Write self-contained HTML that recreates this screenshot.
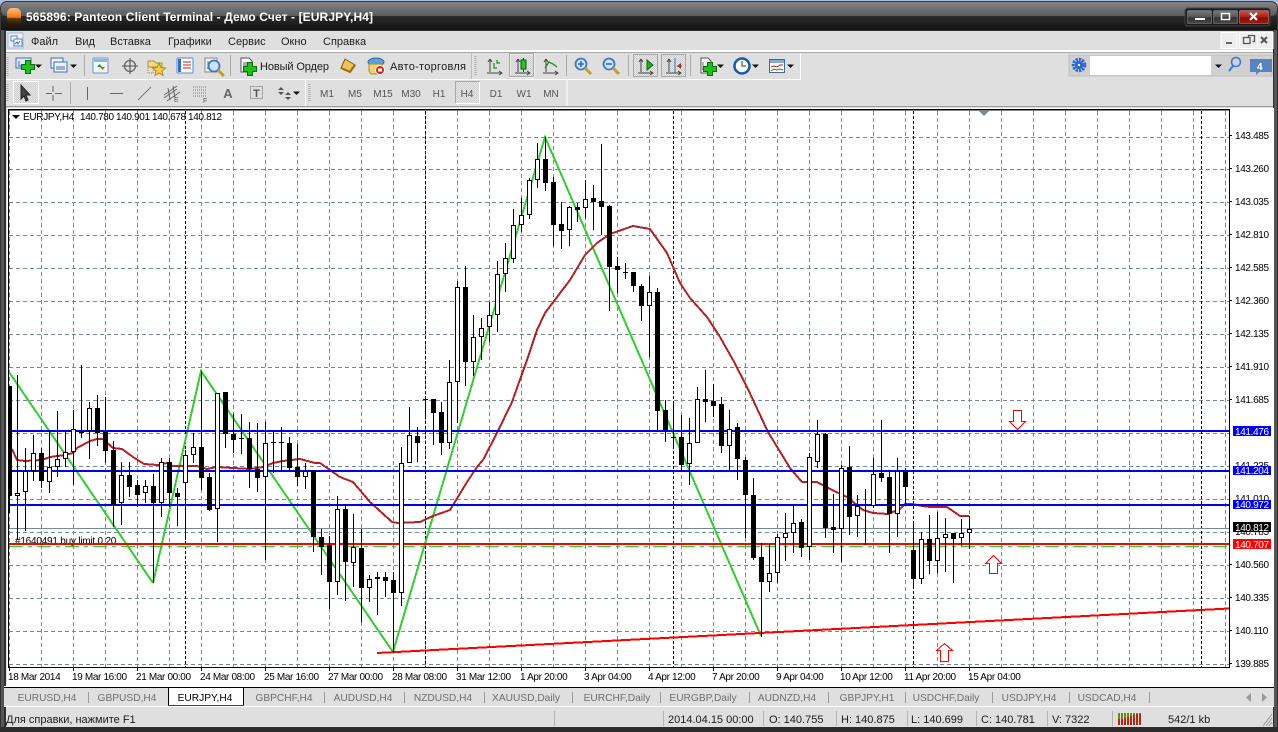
<!DOCTYPE html>
<html><head><meta charset="utf-8"><title>Panteon Client Terminal</title>
<style>
html,body{margin:0;padding:0;background:#dfdfdf;overflow:hidden;width:1278px;height:732px}
svg{display:block;font-family:"Liberation Sans","Noto Sans CJK SC",sans-serif}
.m{font-size:11px;fill:#1c1c1c}
.c{font-size:10px;fill:#000;letter-spacing:-.35px}
.t{font-size:10.2px;fill:#6e6e6e;text-anchor:middle}
.f{font-size:10px;fill:#555;text-anchor:middle}
.s{font-size:11px;fill:#1c1c1c}
.l{font-size:10px;fill:#fff;letter-spacing:-.35px}
</style></head><body>
<svg xmlns="http://www.w3.org/2000/svg" width="1278" height="732" viewBox="0 0 1278 732">
<defs>
<linearGradient id="tb" x1="0" y1="0" x2="0" y2="1"><stop offset="0" stop-color="#858585"/><stop offset="1" stop-color="#5a5a5a"/></linearGradient>
<linearGradient id="tb2" x1="0" y1="0" x2="0" y2="1"><stop offset="0" stop-color="#2b2b2b"/><stop offset="1" stop-color="#131313"/></linearGradient>
<linearGradient id="ball" x1="0" y1="0" x2="0" y2="1"><stop offset="0" stop-color="#ffc080"/><stop offset=".55" stop-color="#ee7a14"/><stop offset=".62" stop-color="#5a3208"/><stop offset="1" stop-color="#2a1a06"/></linearGradient>
<linearGradient id="btn" x1="0" y1="0" x2="0" y2="1"><stop offset="0" stop-color="#7a7a7a"/><stop offset=".5" stop-color="#555"/><stop offset=".55" stop-color="#333"/><stop offset="1" stop-color="#484848"/></linearGradient>
<linearGradient id="btr" x1="0" y1="0" x2="0" y2="1"><stop offset="0" stop-color="#c85a50"/><stop offset=".5" stop-color="#a82018"/><stop offset=".55" stop-color="#8a0a08"/><stop offset="1" stop-color="#a01810"/></linearGradient>
<pattern id="dots" width="2" height="2" patternUnits="userSpaceOnUse"><rect width="2" height="2" fill="#e6e6e6"/><rect width="1" height="1" fill="#cfcfcf"/><rect x="1" y="1" width="1" height="1" fill="#cfcfcf"/></pattern>
<g id="plus"><path d="M-2.500-6.500h5v4h4v5h-4v4h-5v-4h-4v-5h4z" fill="#22c01c" stroke="#0c6a10"/></g>
<g id="arr"><path d="M-3-1.500h7l-3.500 3.500z" fill="#111"/></g>
<g id="lens"><circle cx="6" cy="6" r="5.500" fill="#cfe4fa" stroke="#3a78c4" stroke-width="1.800"/><path d="M10 10l6 6" stroke="#c89a30" stroke-width="3"/></g>
<g id="axes"><path d="M3 1v13M0 15h15M3 1l-2 3M3 1l2 3M12 13l3 2-3 2" stroke="#444" fill="none"/></g>
<clipPath id="ch"><rect x="9" y="111" width="1220" height="556"/></clipPath>
</defs>

<!-- window frame -->
<rect width="1278" height="732" fill="#a9bfdc"/>
<rect y="1" width="1278" height="731" rx="7" fill="#3a3a3a"/>
<rect x="1" y="2" width="1276" height="14" rx="6" fill="url(#tb)"/>
<rect x="1" y="16" width="1276" height="14" fill="url(#tb2)"/>
<rect y="30" width="1278" height="1" fill="#000"/>
<rect x="0" y="30" width="1278" height="702" fill="#303030"/>
<rect x="1" y="30" width="3" height="698" fill="#555"/>
<rect x="1274" y="30" width="3" height="698" fill="#555"/>
<rect x="6" y="31" width="1267" height="696" fill="#dfdfdf"/>
<rect y="727" width="1278" height="5" fill="#2c2c2c"/>

<!-- title -->
<rect x="7" y="8" width="14" height="17" rx="5" fill="url(#ball)"/>
<text x="26" y="21" font-size="12" font-weight="bold" fill="#fff" textLength="347" lengthAdjust="spacing">565896: Panteon Client Terminal - Демо Счет - [EURJPY,H4]</text>
<rect x="1185" y="8" width="85" height="18" rx="3" fill="#1c1c1c" stroke="#444"/>
<rect x="1187.500" y="10.500" width="24" height="13" rx="1" fill="url(#btn)" stroke="#888" stroke-width=".6"/>
<rect x="1213.500" y="10.500" width="24" height="13" rx="1" fill="url(#btn)" stroke="#888" stroke-width=".6"/>
<rect x="1239.500" y="10.500" width="29" height="13" rx="1" fill="url(#btr)" stroke="#d08080" stroke-width=".6"/>
<rect x="1195" y="18" width="10" height="2" fill="#fff"/>
<rect x="1221.500" y="13.500" width="8" height="6" fill="none" stroke="#fff" stroke-width="1.500"/>
<path d="M1250 13l7 7M1257 13l-7 7" stroke="#fff" stroke-width="2.200"/>

<!-- menu -->
<rect x="8" y="33" width="15" height="15" fill="#e8f0fa" stroke="#9fb8dc"/>
<rect x="11" y="36" width="6" height="5" fill="#fff" stroke="#4f7fc0"/><rect x="14" y="39" width="8" height="7" fill="#fff" stroke="#4f7fc0"/>
<path d="M15 44l2-2 1 2 2-3" stroke="#3a6fc0" fill="none"/>
<text class="m" x="31" y="45">Файл</text>
<text class="m" x="75" y="45">Вид</text>
<text class="m" x="110" y="45">Вставка</text>
<text class="m" x="168" y="45">Графики</text>
<text class="m" x="228" y="45">Сервис</text>
<text class="m" x="281" y="45">Окно</text>
<text class="m" x="323" y="45">Справка</text>
<g fill="#eee" stroke="#fff"><rect x="1221" y="32.500" width="16" height="16"/><rect x="1239" y="32.500" width="16" height="16"/><rect x="1257" y="32.500" width="16" height="16"/></g>
<rect x="1226" y="42" width="6" height="2" fill="#666"/>
<path d="M1243.500 37.500h5v-2h6v6h-2M1243.500 37.500v6h6.500v-6z" fill="none" stroke="#555" stroke-width="1.300"/>
<path d="M1261 37l6 6M1267 37l-6 6" stroke="#555" stroke-width="2"/>
<rect x="6" y="50" width="1267" height="2" fill="#fff"/>
<rect x="6" y="52" width="1267" height="1" fill="#a8a8a8"/>

<!-- toolbars lines -->
<rect x="6" y="79" width="795" height="1" fill="#fff"/>
<rect x="800" y="53" width="1" height="27" fill="#fff"/>
<rect x="471" y="53" width="1" height="26" fill="#bdbdbd"/>
<rect x="305" y="80" width="1" height="26" fill="#fff"/>
<rect x="566.500" y="80" width="1" height="26" fill="#fff"/>
<path d="M7.500 57v20M7.500 84v18M475.500 56v20M309.500 84v18" stroke="#aaa" stroke-width="2" stroke-dasharray="1 1"/>
<g fill="#aaa"><rect x="84" y="55" width="1" height="21"/><rect x="230" y="55" width="1" height="21"/><rect x="566" y="55" width="1" height="21"/><rect x="628" y="55" width="1" height="21"/><rect x="690" y="55" width="1" height="21"/><rect x="70" y="82" width="1" height="22"/></g>
<rect x="6" y="106" width="1267" height="1" fill="#9a9a9a"/>

<!-- row 1 icons -->
<g transform="translate(16 58)"><rect width="15" height="10" fill="#dfeafa" stroke="#3f6fb5"/><path d="M3 3v5M2 8h8M11 4v4" stroke="#3f6fb5" fill="none"/><use href="#plus" x="12" y="9"/></g>
<use href="#arr" x="38" y="66"/>
<g transform="translate(51 58)"><rect width="12" height="10" fill="#eef3fb" stroke="#3f6fb5"/><rect x="3" y="4" width="13" height="10" fill="#eef3fb" stroke="#3f6fb5"/><path d="M5 9h9M5 11h9" stroke="#3f6fb5"/></g>
<use href="#arr" x="73" y="66"/>
<g transform="translate(93 58)"><rect width="15" height="15" rx="1" fill="#f2f7fd" stroke="#6a94c8"/><rect x="1" y="1" width="13" height="3" fill="#8fb4e0"/><path d="M4 9l2.500-3 2.500 3z" fill="#20a020"/><path d="M7 9l2.500 3 2.500-3z" fill="#e05020"/></g>
<g stroke="#666" fill="none"><circle cx="130" cy="66" r="5.500" stroke-width="1.300"/><path d="M130 58v16M122 66h16" stroke-width="1.300"/></g>
<g transform="translate(148 58)"><path d="M0 3h6l2 2h6v4H0z" fill="#f2d98a" stroke="#a8903a"/><path d="M0 9h5v6H0z" fill="none" stroke="#a8903a" stroke-dasharray="1 1"/><path d="M11 5l2 4.500 4.500.5-3.500 3 1 4.500-4-2.500-4 2.500 1-4.500-3.500-3 4.500-.5z" fill="#f4d040" stroke="#b08a20"/></g>
<g transform="translate(177 58)"><rect width="16" height="15" rx="1" fill="#fdfdfd" stroke="#5a8ac8"/><rect x="1" y="1" width="3" height="13" fill="#2f6fc8"/><path d="M6 4h8M6 7h8M6 10h8" stroke="#b03030"/></g>
<g transform="translate(205 58)"><rect width="12" height="14" fill="#f2f2f2" stroke="#888"/><path d="M3 3v8M2 10h8" stroke="#777"/></g>
<use href="#lens" x="208" y="60"/>
<g transform="translate(240 58)"><path d="M1 0h8l3 3v11H1z" fill="#fff" stroke="#555"/><path d="M3 5h6M3 7h6M3 9h4" stroke="#555"/><use href="#plus" x="10" y="11"/></g>
<text class="m" x="260" y="70" textLength="69" lengthAdjust="spacing">Новый Ордер</text>
<g transform="translate(340 58)"><path d="M5 1l10 6-5 7-9-4z" fill="#e8c45a" stroke="#7a5a18"/><path d="M1 10l9 4 5-7" fill="none" stroke="#9a6a10" stroke-width="2"/></g>
<g transform="translate(367 57)"><ellipse cx="9" cy="5" rx="8" ry="4" fill="#5aa0dc" stroke="#2c6aa8"/><path d="M2 7h13v7l-3 3H4l-2-3z" fill="#f0d070" stroke="#a88a2a"/><circle cx="13" cy="13" r="4.500" fill="#d82020" stroke="#fff"/><rect x="11" y="11.500" width="4" height="3" fill="#fff"/></g>
<text class="m" x="390" y="70" textLength="76" lengthAdjust="spacing">Авто-торговля</text>
<use href="#axes" x="487" y="58"/><path d="M496 61v3h3M493 64v5h3" stroke="#1a8a1a" fill="none" stroke-width="1.200" transform="translate(1 -1)"/>
<rect x="510" y="54" width="24" height="23" fill="url(#dots)" stroke="#fff"/><rect x="509.500" y="53.500" width="24" height="23" fill="none" stroke="#a8a8a8"/>
<use href="#axes" x="515" y="58"/><rect x="521" y="60" width="5" height="9" fill="#30c030" stroke="#0a5a0a"/><path d="M523.500 58v2M523.500 69v3" stroke="#0a5a0a"/>
<use href="#axes" x="543" y="58"/><path d="M545 68l4-6 4 2 4 3" fill="none" stroke="#1a8a1a" stroke-width="1.300"/>
<use href="#lens" x="575" y="58"/><path d="M578 64h6M581 61v6" stroke="#2a6cc0" stroke-width="1.600"/>
<use href="#lens" x="603" y="58"/><path d="M606 64h6" stroke="#2a6cc0" stroke-width="1.600"/>
<rect x="633.500" y="54.500" width="24" height="22" fill="url(#dots)" stroke="#a8a8a8"/>
<use href="#axes" x="638" y="58"/><path d="M647 60l6 5-6 5z" fill="#18b018" stroke="#0a6a0a"/>
<rect x="661.500" y="54.500" width="24" height="22" fill="url(#dots)" stroke="#a8a8a8"/>
<use href="#axes" x="666" y="58"/><path d="M675 58v15" stroke="#3a6ab0"/><path d="M681 63l-4 3 4 3z" fill="#b03010"/><path d="M677 66h5" stroke="#b03010"/>
<g transform="translate(700 58)"><path d="M1 0h7l3 3v12H1z" fill="#fff" stroke="#555"/><path d="M3 4v8M2 11h7" stroke="#777"/><use href="#plus" x="10" y="11"/></g>
<use href="#arr" x="720" y="66"/>
<circle cx="742" cy="66" r="7.500" fill="#fff" stroke="#1858a8" stroke-width="2.500"/><path d="M742 61v5h4" stroke="#333" fill="none"/>
<use href="#arr" x="755" y="66"/>
<rect x="769.500" y="59.500" width="15" height="13" fill="#f7f7ff" stroke="#46688e"/><rect x="770" y="60" width="14" height="3" fill="#86aad8"/><path d="M771 67l3-1 3 1 3-2 3 0" stroke="#b03010" fill="none"/><path d="M771 71l3-2 3 1 3-1 3 1" stroke="#1a901a" fill="none"/>
<use href="#arr" x="790" y="66"/>

<!-- search -->
<rect x="1069" y="55" width="203" height="21" fill="#d0d0d0" stroke="#c0c0c0"/>
<circle cx="1079" cy="65" r="5.500" fill="none" stroke="#2a66d0" stroke-width="3.500" stroke-dasharray="2.200 1"/><circle cx="1079" cy="65" r="4" fill="#2a66d0"/><circle cx="1079" cy="65" r="1.200" fill="#fff"/>
<rect x="1090" y="56" width="121" height="19" fill="#fff"/>
<use href="#arr" x="1218" y="66"/>
<circle cx="1236" cy="62" r="4.500" fill="none" stroke="#3a78d8" stroke-width="1.600"/><path d="M1233 66l-4 5" stroke="#3a78d8" stroke-width="2"/>
<path d="M1250 59h22v13h-13l-3 3v-3h-6z" fill="#5a82bc"/>
<text x="1257" y="70" font-size="10" font-weight="bold" fill="#fff">4</text>

<!-- row 2 -->
<rect x="13.500" y="81.500" width="25" height="22" fill="url(#dots)" stroke="#fff"/>
<path d="M21 85l0 14 3-3 2 5 2-1-2-5h4z" fill="#444" stroke="#222"/>
<path d="M53 86v6M53 95v6M46 93.500h6M55 93.500h7" stroke="#666" fill="none"/>
<path d="M87.500 87v13" stroke="#666"/>
<path d="M110 93.500h13" stroke="#666"/>
<path d="M138 100l13-13" stroke="#777"/>
<g stroke="#666" fill="none"><path d="M164 98l13-9M164 95l13-9M167 101l13-9M168 88l2 12M173 86l2 12"/></g>
<text x="174" y="102" font-size="7" fill="#555">E</text>
<g stroke="#777" stroke-dasharray="1 1"><path d="M193 87h14M193 90h14M193 93h14M193 96h14"/></g>
<text x="203" y="103" font-size="7" fill="#555">F</text>
<text x="228" y="98" font-size="13" font-weight="bold" fill="#666" text-anchor="middle">A</text>
<rect x="250.500" y="86.500" width="12" height="12" fill="none" stroke="#666" stroke-dasharray="1 1"/>
<text x="256.500" y="97" font-size="11" font-weight="bold" fill="#555" text-anchor="middle">T</text>
<path d="M281 87l-3 3h6zM281 95l-3-3h6zM288 92l-3 3h6zM288 100l-3-3h6z" fill="#555"/>
<use href="#arr" x="296" y="93"/>
<text class="f" x="327" y="97">M1</text>
<text class="f" x="355" y="97">M5</text>
<text class="f" x="383" y="97">M15</text>
<text class="f" x="411" y="97">M30</text>
<text class="f" x="439" y="97">H1</text>
<rect x="455.500" y="81.500" width="24" height="22" fill="url(#dots)" stroke="#fff"/><path d="M455.500 103.500v-22h24" fill="none" stroke="#a8a8a8"/>
<text class="f" x="467" y="97">H4</text>
<text class="f" x="496" y="97">D1</text>
<text class="f" x="524" y="97">W1</text>
<text class="f" x="551" y="97">MN</text>

<!-- chart -->
<rect x="7" y="108" width="1267" height="579" fill="#fff"/>
<g clip-path="url(#ch)" shape-rendering="crispEdges">
<path stroke="#778899" stroke-dasharray="4 3" d="M9.500 111V667M41.500 111V667M73.500 111V667M105.500 111V667M137.500 111V667M169.500 111V667M201.500 111V667M233.500 111V667M265.500 111V667M297.500 111V667M329.500 111V667M361.500 111V667M393.500 111V667M425.500 111V667M457.500 111V667M489.500 111V667M521.500 111V667M553.500 111V667M585.500 111V667M617.500 111V667M649.500 111V667M681.500 111V667M713.500 111V667M745.500 111V667M777.500 111V667M809.500 111V667M841.500 111V667M873.500 111V667M905.500 111V667M937.500 111V667M969.500 111V667M1001.500 111V667M1033.500 111V667M1065.500 111V667M1097.500 111V667M1129.500 111V667M1161.500 111V667M1193.500 111V667M1225.500 111V667"/>
<path stroke="#778899" stroke-dasharray="4 3" d="M9 137.500H1229M9 169.500H1229M9 202.500H1229M9 235.500H1229M9 268.500H1229M9 301.500H1229M9 334.500H1229M9 367.500H1229M9 400.500H1229M9 433.500H1229M9 466.500H1229M9 499.500H1229M9 532.500H1229M9 565.500H1229M9 598.500H1229M9 631.500H1229M9 664.500H1229"/>
<path stroke="#000" stroke-dasharray="3 2" d="M185.500 111V667M425.500 111V667M673.500 111V667M913.500 111V667M1201.500 111V667"/>
<path stroke="#778899" d="M9 528.500H1229"/>
</g>
<g clip-path="url(#ch)">
<path d="M153 583L201 371L393 652L545 137L761 636M9 372L153 583" fill="none" stroke="#32cd32" stroke-width="2" shape-rendering="crispEdges"/>
<path d="M12 449L17 460L25 461L42 460L50 457L65 455L73 453L77 448L90 441L97 439L103 439L113 448L122 449L133 457L144 464L158 465L167 463L173 466L197 466L207 469L217 467L233 468L250 469L263 467L273 463L283 461L300 459L315 463L320 463L340 477L353 482L370 502L392 522L398 523L420 522L433 516L450 510L467 482L477 467L483 460L497 433L512 402L527 360L537 330L545 313L570 280L585 255L597 243L610 234L633 226L650 229L667 253L680 283L690 298L707 317L720 337L733 360L747 387L768 432L790 468L802 482L817 482L830 489L847 497L863 510L873 513L888 514L900 509L905 504L913 504L922 506L930 507L947 507L960 516L969 516" fill="none" stroke="#b22222" stroke-width="2" stroke-linejoin="round" shape-rendering="crispEdges"/>
<g shape-rendering="crispEdges">
<rect x="9" y="430" width="1221" height="2" fill="#0000f0"/>
<rect x="9" y="470" width="1221" height="2" fill="#0000f0"/>
<rect x="9" y="504" width="1221" height="2" fill="#0000f0"/>
<path stroke="#32cd32" stroke-dasharray="14 5 4 5" d="M9 546.500H1229"/>
<rect x="9" y="543" width="1221" height="2" fill="#f00"/>
</g>
<path d="M377 653L1229 608.500" stroke="#f00" stroke-width="2" fill="none" shape-rendering="crispEdges"/>
<text class="c" x="15" y="544" textLength="101" lengthAdjust="spacing">#1640491 buy limit 0.20</text>
<rect x="9" y="543" width="110" height="2" fill="#f00"/>
<!-- candles -->
<g shape-rendering="crispEdges">
<path stroke="#000" fill="none" d="M9.500 386V513M17.500 375V540M25.500 448V531M33.500 435V481M41.500 448V488M49.500 430V493M57.500 411V477M65.500 432V467M73.500 410V485M81.500 365V438M89.500 402V459M97.500 395V446M105.500 397V463M113.500 441V527M121.500 462V525M129.500 462V497M137.500 480V507M145.500 480V503M153.500 474V583M161.500 458V517M169.500 458V507M177.500 488V526M185.500 450V540M193.500 433V463M201.500 371V490M209.500 473V511M217.500 393V542M225.500 392V448M233.500 414V453M241.500 414V454M249.500 422V488M257.500 423V492M265.500 422V560M273.500 432V473M281.500 427V472M289.500 437V472M297.500 444V486M305.500 463V489M313.500 470V552M321.500 529V575M329.500 536V609M337.500 496V595M345.500 504V601M353.500 514V587M361.500 529V622M369.500 575V602M377.500 572V615M385.500 572V597M393.500 572V652M401.500 447V606M409.500 407V463M417.500 427V462M425.500 398V417M433.500 399V445M441.500 402V455M449.500 360V449M457.500 281V423M465.500 266V386M473.500 315V376M481.500 318V360M489.500 302V342M497.500 261V332M505.500 243V292M513.500 209V263M521.500 198V232M529.500 178V219M537.500 143V188M545.500 137V191M553.500 177V246M561.500 202V249M569.500 206V246M577.500 203V222M585.500 180V218M593.500 185V230M601.500 144V235M609.500 205V311M617.500 257V293M625.500 263V279M633.500 272V292M641.500 284V321M649.500 276V357M657.500 288V430M665.500 400V442M673.500 403V448M681.500 415V472M689.500 418V485M697.500 387V443M705.500 370V422M713.500 384V417M721.500 397V453M729.500 410V471M737.500 423V480M745.500 457V538M753.500 478V560M761.500 543V637M769.500 544V592M777.500 534V583M785.500 513V561M793.500 506V553M801.500 519V557M809.500 453V560M817.500 420V468M825.500 433V538M833.500 494V553M841.500 465V562M849.500 446V535M857.500 495V537M865.500 489V545M873.500 458V508M881.500 420V482M889.500 470V553M897.500 458V537M905.500 468V504M913.500 523V587M921.500 532V584M929.500 515V574M937.500 512V573M945.500 518V572M953.500 533V583M961.500 519V546M969.500 516V549"/>
<path fill="#000" d="M7 386h5v110H7zM39 453h5v28h-5zM79 431h5v2h-5zM95 408h5v25h-5zM103 432h5v19h-5zM111 450h5v55h-5zM127 475h5v12h-5zM135 485h5v10h-5zM151 486h5v17h-5zM167 462h5v31h-5zM175 493h5v4h-5zM199 447h5v31h-5zM207 477h5v33h-5zM223 392h5v42h-5zM231 434h5v6h-5zM239 438h5v1h-5zM247 438h5v31h-5zM255 469h5v9h-5zM271 442h5v1h-5zM279 442h5v1h-5zM287 443h5v25h-5zM295 467h5v10h-5zM311 470h5v67h-5zM319 537h5v10h-5zM327 545h5v37h-5zM343 509h5v53h-5zM359 548h5v40h-5zM383 577h5v4h-5zM391 580h5v13h-5zM415 436h5v7h-5zM423 399h5v1h-5zM431 399h5v14h-5zM439 412h5v31h-5zM463 287h5v75h-5zM543 159h5v24h-5zM551 182h5v43h-5zM559 224h5v7h-5zM575 207h5v3h-5zM591 198h5v4h-5zM599 201h5v6h-5zM607 206h5v61h-5zM615 266h5v4h-5zM623 272h5v1h-5zM631 272h5v14h-5zM639 286h5v20h-5zM655 292h5v119h-5zM663 410h5v20h-5zM671 437h5v1h-5zM679 437h5v28h-5zM703 399h5v3h-5zM711 401h5v5h-5zM719 404h5v42h-5zM735 427h5v32h-5zM743 460h5v35h-5zM751 495h5v63h-5zM759 557h5v25h-5zM799 522h5v26h-5zM823 434h5v94h-5zM831 527h5v3h-5zM847 467h5v50h-5zM879 473h5v5h-5zM887 477h5v37h-5zM903 471h5v16h-5zM911 550h5v29h-5zM927 539h5v22h-5zM951 533h5v6h-5z"/>
<path fill="#fff" stroke="#000" d="M15.500 493.500h4v2h-4zM23.500 471.500h4v20h-4zM31.500 453.500h4v17h-4zM47.500 467.500h4v14h-4zM55.500 459.500h4v7h-4zM63.500 452.500h4v6h-4zM71.500 429.500h4v22h-4zM87.500 408.500h4v22h-4zM119.500 475.500h4v27h-4zM143.500 486.500h4v6h-4zM159.500 462.500h4v40h-4zM183.500 455.500h4v27h-4zM191.500 447.500h4v7h-4zM215.500 393.500h4v115h-4zM263.500 443.500h4v33h-4zM303.500 471.500h4v5h-4zM335.500 509.500h4v72h-4zM351.500 547.500h4v15h-4zM367.500 579.500h4v8h-4zM375.500 577.500h4v1h-4zM399.500 463.500h4v129h-4zM407.500 435.500h4v27h-4zM447.500 382.500h4v60h-4zM455.500 287.500h4v94h-4zM471.500 337.500h4v24h-4zM479.500 328.500h4v8h-4zM487.500 315.500h4v11h-4zM495.500 274.500h4v40h-4zM503.500 258.500h4v15h-4zM511.500 225.500h4v33h-4zM519.500 215.500h4v9h-4zM527.500 180.500h4v34h-4zM535.500 159.500h4v20h-4zM567.500 207.500h4v22h-4zM583.500 199.500h4v8h-4zM647.500 292.500h4v13h-4zM687.500 443.500h4v20h-4zM695.500 399.500h4v43h-4zM727.500 429.500h4v16h-4zM767.500 573.500h4v8h-4zM775.500 537.500h4v35h-4zM783.500 533.500h4v4h-4zM791.500 523.500h4v9h-4zM807.500 457.500h4v89h-4zM815.500 434.500h4v27h-4zM839.500 468.500h4v60h-4zM855.500 506.500h4v9h-4zM871.500 474.500h4v31h-4zM895.500 471.500h4v42h-4zM919.500 539.500h4v39h-4zM935.500 538.500h4v22h-4zM943.500 534.500h4v3h-4zM959.500 533.500h4v4h-4zM967.500 529.500h4v3h-4z"/>
</g>
<!-- arrows -->
<g fill="#fff" stroke="#f00" shape-rendering="crispEdges">
<path d="M1013.500 410.500h8v11h4l-8 8-8-8h4z"/>
<path d="M989.500 573.500h8v-10h4l-8-8-8 8h4z"/>
<path d="M940.500 661.500h8v-11h4l-8-7-8 7h4z"/>
</g>
<path d="M979 111h10l-5 5z" fill="#778899"/>
</g>

<!-- frame -->
<path d="M8.500 109.500H1229.500V667.500H8.500Z" fill="none" stroke="#000" shape-rendering="crispEdges"/>
<path d="M8 110H1229" stroke="#000" shape-rendering="crispEdges"/>
<text class="c" x="23" y="120" textLength="51" lengthAdjust="spacing">EURJPY,H4</text>
<text class="c" x="80" y="120">140.780</text><text class="c" x="116" y="120">140.901</text><text class="c" x="152" y="120">140.678</text><text class="c" x="188" y="120">140.812</text>
<path d="M12 115h8l-4 4z" fill="#000"/>

<!-- price axis -->
<path d="M1229 135.500h3M1229 168.500h3M1229 201.500h3M1229 234.500h3M1229 267.500h3M1229 300.500h3M1229 333.500h3M1229 366.500h3M1229 399.500h3M1229 597.500h3M1229 564.500h3M1229 630.500h3M1229 663.500h3" stroke="#000" shape-rendering="crispEdges"/>
<text class="c" x="1235" y="139">143.485</text><text class="c" x="1235" y="172">143.260</text><text class="c" x="1235" y="205">143.035</text><text class="c" x="1235" y="238">142.810</text><text class="c" x="1235" y="271">142.585</text><text class="c" x="1235" y="304">142.360</text><text class="c" x="1235" y="337">142.135</text><text class="c" x="1235" y="370">141.910</text><text class="c" x="1235" y="403">141.685</text><text class="c" x="1235" y="469">141.235</text><text class="c" x="1235" y="502">141.010</text><text class="c" x="1235" y="535">140.785</text><text class="c" x="1235" y="568">140.560</text><text class="c" x="1235" y="601">140.335</text><text class="c" x="1235" y="634">140.110</text><text class="c" x="1235" y="667">139.885</text>
<rect x="1233" y="426" width="38" height="10" fill="#0000f0"/><text class="l" x="1235" y="435">141.476</text>
<rect x="1233" y="466" width="38" height="9" fill="#0000f0"/><text class="l" x="1235" y="474">141.204</text>
<rect x="1233" y="500" width="38" height="9" fill="#0000f0"/><text class="l" x="1235" y="508">140.972</text>
<rect x="1233" y="522" width="38" height="10" fill="#000"/><text class="l" x="1235" y="531">140.812</text>
<rect x="1233" y="539" width="38" height="10" fill="#f00"/><text class="l" x="1235" y="548">140.707</text>

<!-- time axis -->
<path d="M9.500 667v4M73.500 667v4M137.500 667v4M201.500 667v4M265.500 667v4M329.500 667v4M393.500 667v4M457.500 667v4M521.500 667v4M585.500 667v4M649.500 667v4M713.500 667v4M777.500 667v4M841.500 667v4M905.500 667v4M969.500 667v4" stroke="#000" shape-rendering="crispEdges"/>
<text class="c" x="8" y="680">18 Mar 2014</text><text class="c" x="72" y="680">19 Mar 16:00</text><text class="c" x="136" y="680">21 Mar 00:00</text><text class="c" x="200" y="680">24 Mar 08:00</text><text class="c" x="264" y="680">25 Mar 16:00</text><text class="c" x="328" y="680">27 Mar 00:00</text><text class="c" x="392" y="680">28 Mar 08:00</text><text class="c" x="456" y="680">31 Mar 12:00</text><text class="c" x="520" y="680">1 Apr 20:00</text><text class="c" x="584" y="680">3 Apr 04:00</text><text class="c" x="648" y="680">4 Apr 12:00</text><text class="c" x="712" y="680">7 Apr 20:00</text><text class="c" x="776" y="680">9 Apr 04:00</text><text class="c" x="840" y="680">10 Apr 12:00</text><text class="c" x="904" y="680">11 Apr 20:00</text><text class="c" x="968" y="680">15 Apr 04:00</text>

<!-- tabs -->
<rect x="4" y="686" width="1270" height="21" fill="#dfdfdf"/>
<rect x="4" y="686" width="1270" height="1" fill="#fff"/>
<rect x="4" y="687" width="1270" height="1" fill="#000"/>
<rect x="168" y="687" width="76" height="19" fill="#fff"/>
<path d="M168.500 705V687.500H243.500V705" fill="none" stroke="#000" shape-rendering="crispEdges"/>
<rect x="168" y="705" width="76" height="1" fill="#444"/>
<g fill="#9a9a9a"><rect x="88" y="692" width="1" height="11"/><rect x="324" y="692" width="1" height="11"/><rect x="404" y="692" width="1" height="11"/><rect x="484" y="692" width="1" height="11"/><rect x="572" y="692" width="1" height="11"/><rect x="660" y="692" width="1" height="11"/><rect x="749" y="692" width="1" height="11"/><rect x="828" y="692" width="1" height="11"/><rect x="905" y="692" width="1" height="11"/><rect x="992" y="692" width="1" height="11"/><rect x="1069" y="692" width="1" height="11"/><rect x="1149" y="692" width="1" height="11"/></g>
<text class="t" x="47" y="701">EURUSD,H4</text><text class="t" x="127" y="701">GBPUSD,H4</text><text class="t" x="205" y="701" style="fill:#000">EURJPY,H4</text><text class="t" x="284" y="701">GBPCHF,H4</text><text class="t" x="363" y="701">AUDUSD,H4</text><text class="t" x="443" y="701">NZDUSD,H4</text><text class="t" x="526" y="701">XAUUSD,Daily</text><text class="t" x="617" y="701">EURCHF,Daily</text><text class="t" x="703" y="701">EURGBP,Daily</text><text class="t" x="787" y="701">AUDNZD,H4</text><text class="t" x="867" y="701">GBPJPY,H1</text><text class="t" x="946" y="701">USDCHF,Daily</text><text class="t" x="1029" y="701">USDJPY,H4</text><text class="t" x="1107" y="701">USDCAD,H4</text>
<path d="M1251 693l-5 4.500 5 4.500zM1262 693l5 4.500-5 4.500z" fill="#9a9a9a"/>

<!-- status bar -->
<rect x="4" y="706" width="1270" height="1" fill="#fff"/>
<text class="s" x="6" y="723">Для справки, нажмите F1</text>
<g fill="#b4b4b4"><rect x="554" y="711" width="1" height="15"/><rect x="663" y="711" width="1" height="15"/><rect x="763" y="711" width="1" height="15"/><rect x="836" y="711" width="1" height="15"/><rect x="907" y="711" width="1" height="15"/><rect x="976" y="711" width="1" height="15"/><rect x="1047" y="711" width="1" height="15"/><rect x="1112" y="711" width="1" height="15"/></g>
<text class="s" x="668" y="723">2014.04.15 00:00</text>
<text class="s" x="769" y="723">O: 140.755</text>
<text class="s" x="841" y="723">H: 140.875</text>
<text class="s" x="911" y="723">L: 140.699</text>
<text class="s" x="981" y="723">C: 140.781</text>
<text class="s" x="1052" y="723">V: 7322</text>
<g shape-rendering="crispEdges"><path stroke="#6a8a10" stroke-width="2" stroke-dasharray="0" d="M1119 719v-6M1122 719v-6M1125 718v-5M1128 717v-4M1131 716v-3M1134 715v-2M1137 714v-1M1140 714v-1"/><path stroke="#b02818" stroke-width="2" d="M1119 725v-6M1122 725v-6M1125 725v-7M1128 725v-8M1131 725v-9M1134 725v-10M1137 725v-11M1140 725v-11"/></g>
<text class="s" x="1168" y="723">542/1 kb</text>
<path d="M1272 714l-9 12M1272 718l-6 8M1272 722l-3 4" stroke="#999" fill="none"/>
</svg>
</body></html>
